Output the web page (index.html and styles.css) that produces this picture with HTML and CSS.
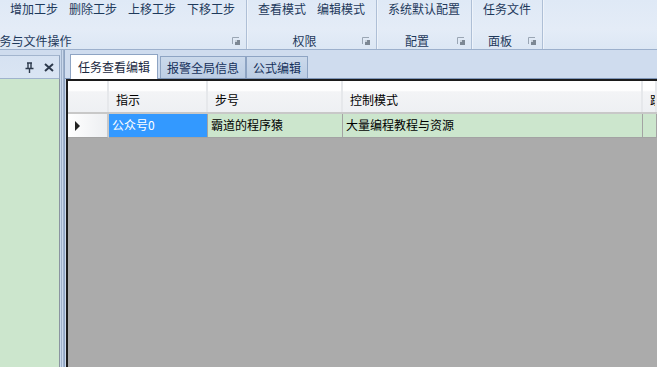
FILE: index.html
```html
<!DOCTYPE html>
<html lang="zh-CN">
<head>
  <meta charset="UTF-8">
  <meta name="viewport" content="width=device-width, initial-scale=1.0">
  <title>任务查看编辑</title>
  <link rel="stylesheet" href="styles.css">
</head>
<body>
  <div class="ribbon">
    <div class="group group-first">
      <div class="buttons">
        <span class="btn">增加工步</span>
        <span class="btn">删除工步</span>
        <span class="btn">上移工步</span>
        <span class="btn">下移工步</span>
      </div>
      <div class="group-foot">
        <span class="group-label">任务与文件操作</span>
        <svg class="launcher" width="8" height="8" viewBox="0 0 8 8"><path d="M0.5 7V0.5H7" fill="none" stroke="#9aa6b4"/><rect x="3" y="3" width="5" height="5" fill="#7d8894"/><rect x="3" y="3" width="2" height="2" fill="#c9d2dc"/></svg>
      </div>
    </div>
    <div class="group">
      <div class="buttons">
        <span class="btn">查看模式</span>
        <span class="btn">编辑模式</span>
      </div>
      <div class="group-foot">
        <span class="group-label">权限</span>
        <svg class="launcher" width="8" height="8" viewBox="0 0 8 8"><path d="M0.5 7V0.5H7" fill="none" stroke="#9aa6b4"/><rect x="3" y="3" width="5" height="5" fill="#7d8894"/><rect x="3" y="3" width="2" height="2" fill="#c9d2dc"/></svg>
      </div>
    </div>
    <div class="group">
      <div class="buttons">
        <span class="btn">系统默认配置</span>
      </div>
      <div class="group-foot">
        <span class="group-label">配置</span>
        <svg class="launcher" width="8" height="8" viewBox="0 0 8 8"><path d="M0.5 7V0.5H7" fill="none" stroke="#9aa6b4"/><rect x="3" y="3" width="5" height="5" fill="#7d8894"/><rect x="3" y="3" width="2" height="2" fill="#c9d2dc"/></svg>
      </div>
    </div>
    <div class="group">
      <div class="buttons">
        <span class="btn">任务文件</span>
      </div>
      <div class="group-foot">
        <span class="group-label">面板</span>
        <svg class="launcher" width="8" height="8" viewBox="0 0 8 8"><path d="M0.5 7V0.5H7" fill="none" stroke="#9aa6b4"/><rect x="3" y="3" width="5" height="5" fill="#7d8894"/><rect x="3" y="3" width="2" height="2" fill="#c9d2dc"/></svg>
      </div>
    </div>
  </div>

  <div class="workspace">
    <div class="side">
      <div class="side-head">
        <svg class="pin" width="9" height="11" viewBox="0 0 9 11"><path d="M2 1H7M3 1V6M6 1V6M0.5 6.5H8.5M4.5 7V11" fill="none" stroke="#2d3a4c" stroke-width="1.4"/></svg>
        <svg class="close" width="10" height="9" viewBox="0 0 10 9"><path d="M1 1L9 8M9 1L1 8" fill="none" stroke="#2d3a4c" stroke-width="2"/></svg>
      </div>
      <div class="side-body"></div>
    </div>
    <div class="splitter"></div>
    <div class="main">
      <div class="tabs">
        <span class="tab active">任务查看编辑</span>
        <span class="tab">报警全局信息</span>
        <span class="tab">公式编辑</span>
      </div>
      <div class="grid">
        <div class="row head">
          <div class="cell rowhdr"></div>
          <div class="cell">指示</div>
          <div class="cell">步号</div>
          <div class="cell">控制模式</div>
          <div class="cell">跳</div>
        </div>
        <div class="row data">
          <div class="cell rowhdr"><span class="arrow"></span></div>
          <div class="cell selected">公众号0</div>
          <div class="cell">霸道的程序猿</div>
          <div class="cell">大量编程教程与资源</div>
          <div class="cell"></div>
        </div>
      </div>
    </div>
  </div>
</body>
</html>
```

FILE: styles.css
```css
* {
  margin: 0;
  padding: 0;
  box-sizing: border-box;
}
html, body {
  width: 657px;
  height: 367px;
  overflow: hidden;
}
body {
  font-family: "Noto Sans CJK SC", "Liberation Sans", sans-serif;
  font-size: 12px;
  color: #15428b;
  background: #cfdcee;
  display: flex;
  flex-direction: column;
}

/* ribbon */
.ribbon {
  height: 50px;
  display: flex;
  background: linear-gradient(#dfe9f6, #e4ecf7 60%, #dce7f4);
  border-bottom: 1px solid #9cb0cc;
  flex-shrink: 0;
}
.group {
  display: flex;
  flex-direction: column;
  justify-content: space-between;
  border-right: 1px solid #aebfd6;
  box-shadow: 1px 0 0 #eef3fa;
  padding: 0 6px;
  color: #1e395b;
  flex-shrink: 0;
}
.group-first {
  margin-left: -173px;
  width: 420px;
}
.group-first .buttons {
  justify-content: flex-end;
}
.buttons {
  display: flex;
  gap: 1px;
  height: 18px;
  line-height: 18px;
}
.btn {
  padding: 0 5px;
  white-space: nowrap;
}
.group-foot {
  display: flex;
  align-items: center;
  height: 17px;
}
.group-label {
  flex: 1;
  text-align: center;
  white-space: nowrap;
  line-height: 17px;
}
.launcher {
  margin-left: 6px;
  margin-top: 1px;
}

/* workspace */
.workspace {
  flex: 1;
  display: flex;
  min-height: 0;
}
.side {
  width: 60px;
  display: flex;
  flex-direction: column;
  padding-top: 5px;
}
.side-head {
  height: 23px;
  display: flex;
  align-items: center;
  justify-content: flex-end;
  gap: 10px;
  padding-right: 5px;
  background: linear-gradient(#d6e2f2, #dae5f3);
  border-top: 1px solid #a3b5ce;
  border-right: 1px solid #8fa2bd;
}
.side-body {
  flex: 1;
  background: #cce6cd;
  border-top: 1px solid #9fb3cd;
  border-right: 1px solid #8a94a0;
}
.splitter {
  width: 4px;
  background: repeating-linear-gradient(90deg, #c9d8ec 0 1px, #9fb1ca 1px 2px);
}
.main {
  flex: 1;
  display: flex;
  flex-direction: column;
  border-left: 1px solid #8ea4c3;
  min-width: 0;
}

/* tabs */
.tabs {
  height: 29px;
  display: flex;
  align-items: flex-end;
  padding-left: 5px;
  border-bottom: 1px solid #7f96b8;
  flex-shrink: 0;
}
.tab {
  height: 22px;
  line-height: 21px;
  padding: 0 6px;
  background: linear-gradient(#cbd9eb, #bccde4);
  border: 1px solid #8ea4c3;
  border-bottom: none;
  color: #15305a;
  white-space: nowrap;
}
.tab.active {
  height: 25px;
  line-height: 24px;
  padding: 0 7px;
  margin-right: 2px;
  margin-bottom: -1px;
  background: #fff;
  color: #1a2840;
}

/* grid */
.grid {
  flex: 1;
  margin-left: 1px;
  background: #ababab;
  border-top: 2px solid #1c1c1c;
  border-left: 2px solid #1c1c1c;
}
.row {
  display: grid;
  grid-template-columns: 41px 99px 135px 300px 1fr;
}
.cell {
  color: #000;
  white-space: nowrap;
  overflow: hidden;
}
.head {
  height: 33px;
  background: linear-gradient(#fff 30%, #f3f4f6 35%, #eef0f3);
  border-bottom: 2px solid #c8c8c8;
}
.head .cell {
  border-right: 2px solid #e6e8eb;
  padding: 11px 0 0 7px;
  line-height: 16px;
}
.data {
  height: 24px;
  background: #cce6cd;
}
.data .cell {
  border-right: 1px solid #a3a3a3;
  border-bottom: 1px solid #a3a3a3;
  line-height: 22px;
  padding-left: 3px;
}
.data .rowhdr {
  background: linear-gradient(90deg, #fff, #eceef1);
  border-right: 2px solid #c8c8c8;
  display: flex;
  align-items: center;
  padding-left: 7px;
}
.arrow {
  width: 0;
  height: 0;
  border-top: 5px solid transparent;
  border-bottom: 5px solid transparent;
  border-left: 5px solid #222;
}
.data .selected {
  background: #3399ff;
  color: #fff;
}
```
